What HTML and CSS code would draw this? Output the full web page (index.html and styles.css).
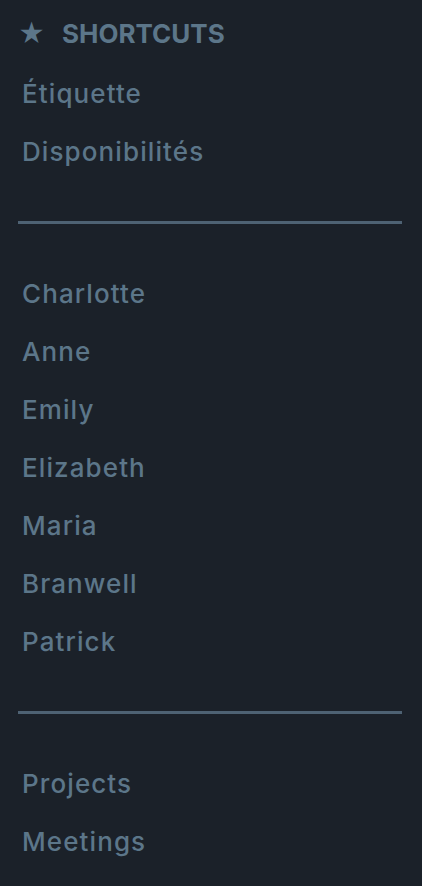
FILE: index.html
```html
<html>
<head>
	<title>Shortcuts</title>
	<meta charset="UTF-8">
	<meta name="viewport" content="width=device-width, initial-scale=1.0"/>
	<link rel="stylesheet" href="styles.css">
</head>
<body>
	<nav class="sidebar">
		<div class="heading"><span class="star">★</span>SHORTCUTS</div>
		<ul class="group">
			<li>Étiquette</li>
			<li>Disponibilités</li>
		</ul>
		<hr class="rule">
		<ul class="group">
			<li>Charlotte</li>
			<li>Anne</li>
			<li>Emily</li>
			<li>Elizabeth</li>
			<li>Maria</li>
			<li>Branwell</li>
			<li>Patrick</li>
		</ul>
		<hr class="rule">
		<ul class="group">
			<li>Projects</li>
			<li>Meetings</li>
		</ul>
	</nav>
</body>
</html>
```

FILE: styles.css
```css
*{
	margin: 0;
	padding: 0;
}
html, body{
	background: #1b2129;
}
body{
	font-family: Inter, "Noto Sans", sans-serif;
	color: #5c7689;
}
.sidebar{
	padding: 7px 20px 0 18px;
}
.heading{
	display: flex;
	align-items: center;
	line-height: 54px;
	margin-bottom: 4px;
	font-size: 26px;
	font-weight: 700;
}
.star{
	font-size: 26px;
	width: 44px;
	font-weight: 400;
}
.group{
	list-style: none;
}
.group li{
	line-height: 58px;
	font-size: 26px;
	font-weight: 500;
	letter-spacing: 1.1px;
	padding-left: 4px;
}
.rule{
	border: none;
	height: 3px;
	background: #4e6273;
	margin: 40px 0 41px;
}
```
